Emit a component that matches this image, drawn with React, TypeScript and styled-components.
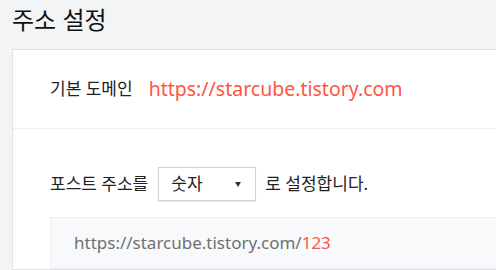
import React from "react";
import styled, {createGlobalStyle} from "styled-components";

const Global = createGlobalStyle`
  html, body {
    margin: 0;
    padding: 0;
    background: #f3f4f6;
    font-family: "Noto Sans", "Noto Sans CJK KR", sans-serif;
    overflow: hidden;
  }
`;

let Page = styled.div`
  padding: 3px 0 0 12px;
  width: 560px;
`;
let Title = styled.h1`
  margin: 0 0 12px 0;
  font-size: 24px;
  font-weight: 400;
  color: #111;
  line-height: 34px;
`;
let Card = styled.div`
  background: #fff;
  border: 1px solid #dfe2e7;
  border-right: none;
`;
let Row = styled.div<{first?: boolean}>`
  padding: ${p => p.first ? "25px 0 25px 37px" : "38px 0 0 37px"};
  border-bottom: ${p => p.first ? "1px solid #eceef1" : "none"};
  display: ${p => p.first ? "flex" : "block"};
  align-items: center;
  line-height: 28px;
`;
let Label = styled.span`
  font-size: 17px;
  color: #222;
  margin-right: 16px;
`;
let Domain = styled.span`
  font-size: 19.5px;
  color: #ff5544;
`;
let Line = styled.div`
  display: flex;
  align-items: center;
  font-size: 17px;
  color: #222;
`;
let Select = styled.div`
  margin: 0 9px 0 10px;
  width: 98px;
  height: 34px;
  border: 1px solid #cfd3d9;
  box-shadow: 0 1px 1px rgba(0,0,0,0.08);
  display: flex;
  align-items: center;
  justify-content: space-between;
  padding: 0 14px 0 12px;
  box-sizing: border-box;
  font-size: 17px;
  color: #222;
`;
let Arrow = styled.span`
  width: 0;
  height: 0;
  border-left: 3.5px solid transparent;
  border-right: 3.5px solid transparent;
  border-top: 5px solid #333;
`;
let Preview = styled.div`
  margin-top: 16px;
  background: #f8f9fb;
  border: 1px solid #eceef1;
  border-right: none;
  padding: 13px 0 13px 23px;
  font-size: 17px;
  color: #707070;
  line-height: 24px;
`;
let Red = styled.span`
  color: #ff5544;
`;

export default function App() {
  return (
    <Page>
      <Global/>
      <Title>주소 설정</Title>
      <Card>
        <Row first>
          <Label>기본 도메인</Label>
          <Domain>https://starcube.tistory.com</Domain>
        </Row>
        <Row>
          <Line>
            포스트 주소를
            <Select>숫자<Arrow/></Select>
            로 설정합니다.
          </Line>
          <Preview>https://starcube.tistory.com/<Red>123</Red></Preview>
        </Row>
      </Card>
    </Page>
  );
}
